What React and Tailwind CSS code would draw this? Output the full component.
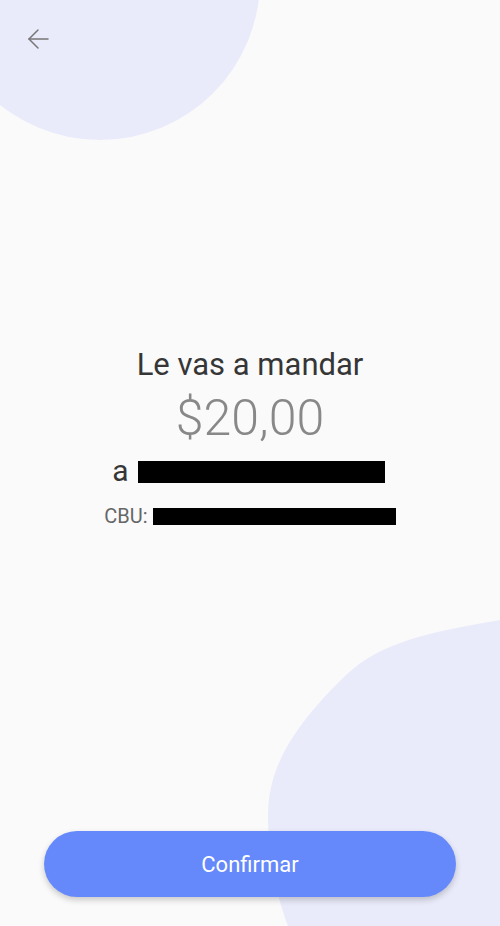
export default function App() {
  return (
    <div className="relative h-[926px] w-full overflow-hidden bg-[#fafafa] font-['Roboto',sans-serif]">
      {/* background blobs */}
      <div className="absolute left-[-60px] top-[-180px] h-[320px] w-[320px] rounded-full bg-[#eaebfa]" />
      <svg className="absolute left-0 top-0" width="500" height="926" viewBox="0 0 500 926">
        <path
          d="M500,620 C430,632 380,642 345,676 C300,720 268,762 268,815 C268,860 278,900 288,926 L500,926 Z"
          fill="#eaebfa"
        />
      </svg>

      <div className="relative flex h-full flex-col">
        <div className="px-[27px] pt-[28px]">
          <svg width="22" height="22" viewBox="0 0 22 22" fill="none" stroke="#777" strokeWidth="1.5" strokeLinecap="round">
            <path d="M2 11 H21" />
            <path d="M11 2 L2 11 L11 20" />
          </svg>
        </div>

        <div className="mt-[297px] flex flex-col items-center">
          <p className="text-[31px] leading-[36px] text-[#363636]">Le vas a mandar</p>
          <p className="mt-[7px] text-[50px] font-light leading-[56px] text-[#888]">$20,00</p>
          <div className="mt-[8px] flex items-center gap-[9px] pr-[3px]">
            <span className="text-[30px] leading-[34px] text-[#363636]">a</span>
            <div className="mt-[2px] h-[22px] w-[247px] bg-black" />
          </div>
          <div className="mt-[17px] flex items-center gap-[5px]">
            <span className="text-[20px] leading-[22px] text-[#666]">CBU:</span>
            <div className="h-[17px] w-[243px] bg-black" />
          </div>
        </div>

        <div className="mt-auto px-[44px] pb-[29px]">
          <button className="flex h-[66px] w-full items-center justify-center rounded-full bg-[#6589fb] text-[22px] text-white shadow-[0_3px_6px_rgba(0,0,0,0.2)]">
            Confirmar
          </button>
        </div>
      </div>
    </div>
  )
}
